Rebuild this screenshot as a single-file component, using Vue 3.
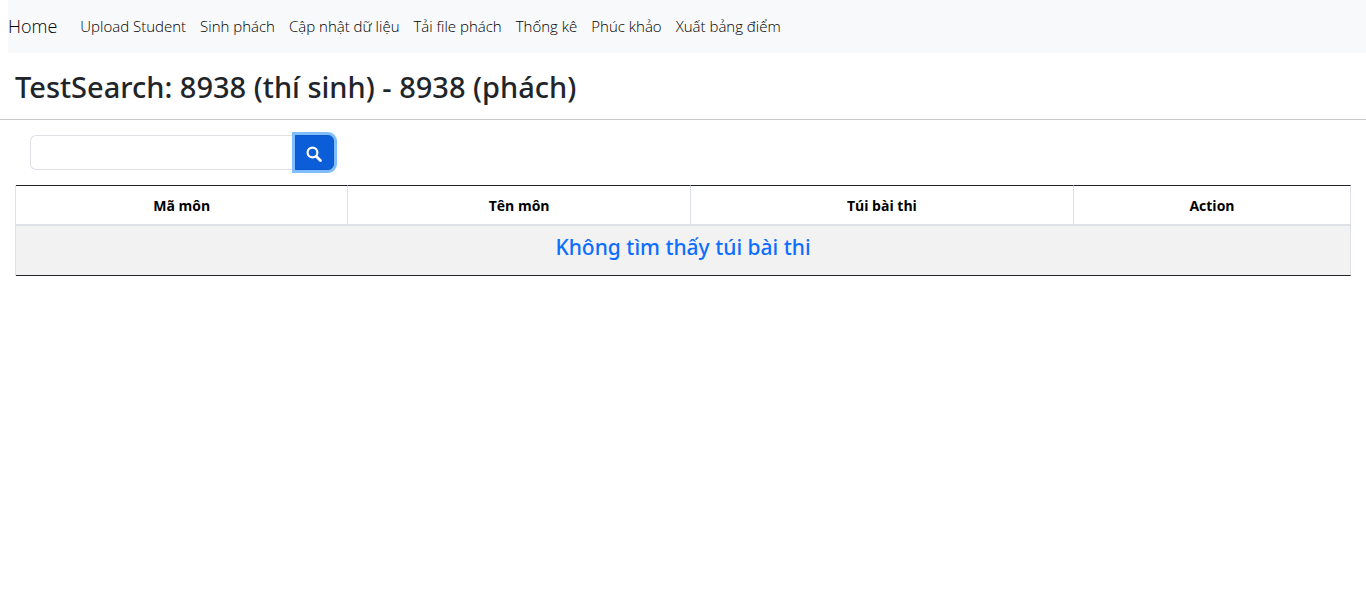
<script setup>
import { ref } from 'vue'

const keyword = ref('')
const links = ['Upload Student', 'Sinh phách', 'Cập nhật dữ liệu', 'Tải file phách', 'Thống kê', 'Phúc khảo', 'Xuất bảng điểm']
const students = 8938
const codes = 8938
</script>

<template>
  <div class="page">
    <nav class="navbar">
      <a class="brand" href="#">Home</a>
      <a v-for="link in links" :key="link" class="link" href="#">{{ link }}</a>
    </nav>
    <header class="heading">
      <h1>TestSearch: {{ students }} (thí sinh) - {{ codes }} (phách)</h1>
    </header>
    <main>
      <form class="search" @submit.prevent>
        <input v-model="keyword" type="text" aria-label="Search" />
        <button type="submit" aria-label="Submit search">
          <svg viewBox="0 0 16 16" width="16" height="16" aria-hidden="true">
            <circle cx="6.5" cy="6.5" r="4.9" fill="none" stroke="#fff" stroke-width="2.2" />
            <path d="M10.2 10.2L14.4 14.4" stroke="#fff" stroke-width="2.8" stroke-linecap="round" />
          </svg>
        </button>
      </form>
      <table>
        <colgroup>
          <col class="col-code" />
          <col class="col-name" />
          <col class="col-bag" />
          <col />
        </colgroup>
        <thead>
          <tr>
            <th scope="col">Mã môn</th>
            <th scope="col">Tên môn</th>
            <th scope="col">Túi bài thi</th>
            <th scope="col">Action</th>
          </tr>
        </thead>
        <tbody>
          <tr>
            <td colspan="4">Không tìm thấy túi bài thi</td>
          </tr>
        </tbody>
      </table>
    </main>
  </div>
</template>

<style>
body {
  margin: 0;
  background: #fff;
}
</style>

<style scoped>
.page {
  font-family: "Noto Sans", "Open Sans", sans-serif;
  font-size: 14px;
  color: #212529;
}
.navbar {
  display: flex;
  align-items: center;
  gap: 14px;
  box-sizing: border-box;
  height: 53px;
  margin-left: 8px;
  padding-bottom: 2px;
  background: #f8f9fa;
}
.navbar a {
  color: #000;
  font-family: "Open Sans", "Noto Sans", sans-serif;
  font-size: 15px;
  font-weight: 300;
  line-height: 24px;
  white-space: nowrap;
  text-decoration: none;
}
.navbar .brand {
  margin-right: 9px;
  font-size: 18px;
}
.heading {
  padding: 14px 15px 12px;
  border-bottom: 1px solid #c8c9ca;
}
h1 {
  margin: 0;
  font-size: 29px;
  font-weight: 500;
  line-height: 40px;
}
main {
  padding: 15px;
}
.search {
  display: flex;
  width: 304px;
  height: 35px;
  margin: 0 0 15px 15px;
}
.search input {
  flex: 1;
  min-width: 0;
  box-sizing: border-box;
  padding: 6px 12px;
  border: 1px solid #dee2e6;
  border-right: 0;
  border-radius: 6px 0 0 6px;
  background: #fff;
  font: inherit;
  outline: none;
}
.search button {
  display: flex;
  align-items: center;
  justify-content: center;
  box-sizing: border-box;
  width: 39px;
  padding: 3px 1px 0 0;
  border: 1px solid #0a58ca;
  border-radius: 0 6px 6px 0;
  background: #0b5ed7;
  box-shadow: 0 0 0 3px #80bdff;
  cursor: pointer;
}
table {
  width: 100%;
  table-layout: fixed;
  border-collapse: separate;
  border-spacing: 0;
  border-left: 1px solid #dee2e6;
  text-align: center;
}
.col-code {
  width: 24.9%;
}
.col-name {
  width: 25.65%;
}
.col-bag {
  width: 28.7%;
}
th {
  padding: 9px 8px 7px;
  border-top: 1px solid #212529;
  border-right: 1px solid #dee2e6;
  border-bottom: 2px solid #dee2e6;
  color: #000;
  font-family: "Open Sans", "Noto Sans", sans-serif;
  font-weight: 700;
  line-height: 22px;
}
td {
  padding: 9px 8px 15px;
  border-right: 1px solid #dee2e6;
  border-bottom: 1px solid #212529;
  background: #f2f2f2;
  color: #0d6efd;
  font-size: 21px;
  font-weight: 500;
  line-height: 25px;
}
</style>
